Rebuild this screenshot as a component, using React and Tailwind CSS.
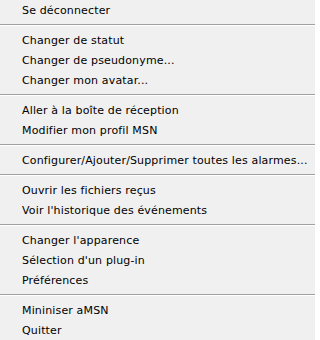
import React from "react";

const groups = [
  ["Se déconnecter"],
  ["Changer de statut", "Changer de pseudonyme...", "Changer mon avatar..."],
  ["Aller à la boîte de réception", "Modifier mon profil MSN"],
  ["Configurer/Ajouter/Supprimer toutes les alarmes..."],
  ["Ouvrir les fichiers reçus", "Voir l'historique des événements"],
  ["Changer l'apparence", "Sélection d'un plug-in", "Préférences"],
  ["Mininiser aMSN", "Quitter"],
];

export default function App() {
  return (
    <div
      className="w-[315px] h-[340px] overflow-hidden bg-[#f0f0f0] pt-[1px] text-black text-[11px] tracking-[0.15px]"
      style={{ fontFamily: '"DejaVu Sans", sans-serif' }}
    >
      {groups.map((g, gi) => (
        <div key={gi}>
          {gi > 0 && (
            <div className="h-[10px] pt-[3px]">
              <div className="h-[1px] bg-[#a0a0a0]" />
              <div className="h-[1px] bg-white" />
            </div>
          )}
          {g.map((t) => (
            <div key={t} className="h-[20px] leading-[20px] pl-[22px] whitespace-nowrap">
              {t}
            </div>
          ))}
        </div>
      ))}
    </div>
  );
}
